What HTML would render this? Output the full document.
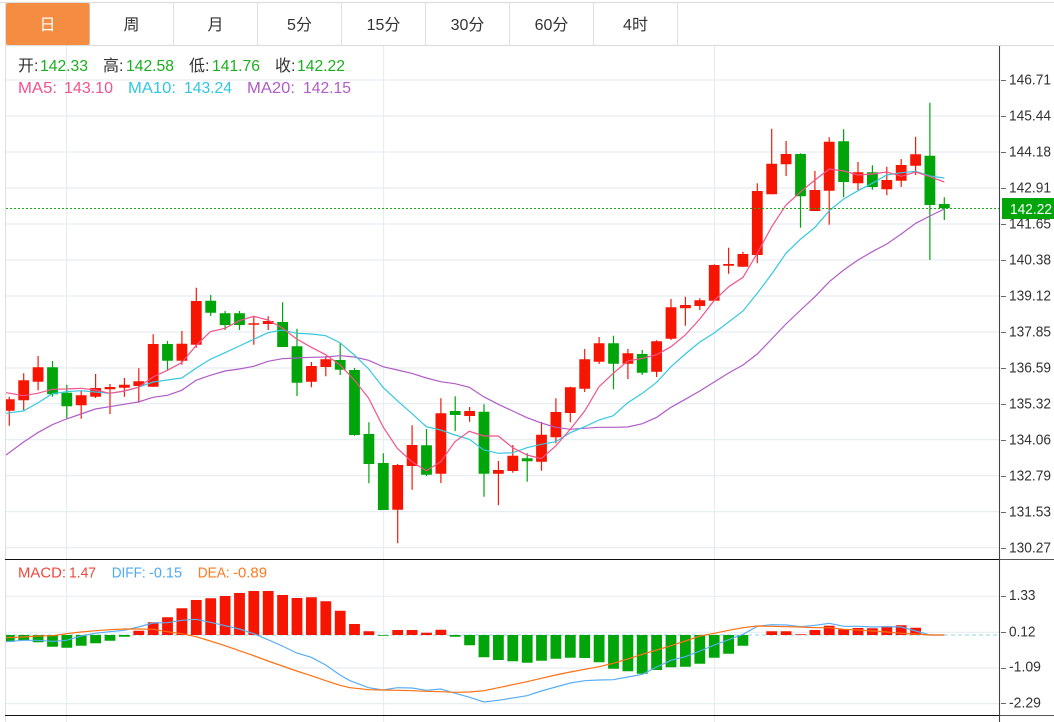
<!DOCTYPE html>
<html lang="zh"><head><meta charset="utf-8"><title>K线图</title>
<style>
html,body{margin:0;padding:0;background:#fff;width:1054px;height:722px;overflow:hidden}
svg{display:block}
text{font-family:"Liberation Sans","Noto Sans CJK SC",sans-serif}
</style></head><body>
<svg width="1054" height="722" viewBox="0 0 1054 722" xmlns="http://www.w3.org/2000/svg">
<defs><clipPath id="c"><rect x="6" y="46" width="993" height="676"/></clipPath></defs>
<!-- grid -->
<path d="M6 80H999M6 116H999M6 152H999M6 188H999M6 224H999M6 260H999M6 296H999M6 332H999M6 368H999M6 403.6H999M6 439.6H999M6 475.6H999M6 511.6H999M6 547.6H999M6 596.3H999M6 632.3H999M6 668H999M6 703.6H999M66.5 46V722M383.5 46V722M714.5 46V722" stroke="#e6eef4" stroke-width="1.2" fill="none"/>
<!-- frame -->
<path d="M0 2.5H1054M5 45.5H1054" stroke="#dedede" stroke-width="1.2" fill="none"/>
<path d="M5.5 2V722M173.5 3V45M257.5 3V45M341.5 3V45M425.5 3V45M509.5 3V45M593.5 3V45M677.5 3V45M89.5 3V45" stroke="#dedede" stroke-width="1" fill="none"/>
<rect x="6" y="3" width="83.5" height="42" rx="2" fill="#f48c42"/>
<g font-size="16" fill="#333" text-anchor="middle">
<text x="47.5" y="30" fill="#fff">日</text><text x="131.5" y="30">周</text><text x="215.5" y="30">月</text><text x="299.5" y="30">5分</text><text x="383.5" y="30">15分</text><text x="467.5" y="30">30分</text><text x="551.5" y="30">60分</text><text x="635.5" y="30">4时</text>
</g>
<g clip-path="url(#c)" fill="none">
<!-- zero line -->
<path d="M6 635H999" stroke="#a9dcee" stroke-width="1.3" stroke-dasharray="4 3"/>
<!-- candle wicks -->
<path stroke="#f61a06" stroke-width="1.2" d="M9.3 396.7V425.7M23.7 373.3V410M38.1 356V390.3M81.2 391V418.7M95.6 374V398M110 384V414M124.4 378V396.7M138.8 368.3V402.7M153.2 334.3V386.7M181.9 331V364.7M196.3 287.7V347.7M253.8 316.7V344.7M268.2 316.3V330M311.4 362V387.3M325.8 356V376.3M397.7 464V543.3M412.1 425.3V489.7M440.9 398.3V483M469.6 407V421.7M498.4 461V505.3M512.8 445V472.7M541.5 422V470.7M555.9 398.3V443.3M570.3 386.7V422.3M584.7 349V392M599.1 337V364M627.9 349V379M656.6 340.3V377M671 299V340M685.4 296.7V325.7M699.8 298.3V310M714.2 264.3V300.7M728.6 247.7V273.7M742.9 251.7V266.7M757.3 183.3V263.3M771.7 128.7V194.3M786.1 141V176M814.9 171V211M829.2 137.3V224.7M858 162V190M886.8 166.7V195.3M901.2 159V187M915.6 136.7V175"/>
<path stroke="#00a50a" stroke-width="1.2" d="M52.5 361V396.7M66.8 384.7V418.3M167.5 341V370.7M210.7 295V316M225.1 311V330M239.5 311V330M282.6 302.3V347M297 328.7V396M340.2 343.3V375M354.5 368V435.7M368.9 422.3V483.3M383.3 453.3V510M426.5 429V476M455.2 396.3V431M484 404.3V496.7M527.2 453.3V481.7M613.5 335.7V389.3M642.2 350V375M800.5 153.3V227.7M843.6 129.3V197.3M872.4 165.3V189.7M929.9 102.7V260M944.3 197.3V220"/>
<!-- candle bodies -->
<path stroke="#f61500" stroke-width="10.8" d="M9.3 399.3V410.7M23.7 380.3V400.3M38.1 367.3V381.7M81.2 395.3V405.3M95.6 388V396.7M110 387V389.3M124.4 384.7V387.7M138.8 381.3V386M153.2 344V386.7M181.9 343.7V360.7M196.3 301V344.7M253.8 323.3V324.7M268.2 321V324M311.4 366V381.7M325.8 359.3V367M397.7 465V509.7M412.1 445V466M440.9 413.3V473.7M469.6 411V416M498.4 470V473.7M512.8 455.7V471M541.5 434.7V461.7M555.9 412V437.3M570.3 387.3V413M584.7 359.3V388.7M599.1 343.3V361.7M627.9 353.3V363.7M656.6 341.3V371.7M671 307.3V338.7M685.4 305V308.3M699.8 300.3V306M714.2 265V300.7M728.6 264V265.7M742.9 254V266.7M757.3 191V255M771.7 163.7V194.3M786.1 154V164.3M814.9 190V211M829.2 141.7V190.7M858 172.3V183.3M886.8 180V189.3M901.2 165V180.7M915.6 154.3V165.7"/>
<path stroke="#00a50a" stroke-width="10.8" d="M52.5 367.3V394.3M66.8 392.7V406.3M167.5 344V360.7M210.7 300.7V312.7M225.1 313.3V325M239.5 313.3V325M282.6 322V347M297 346.3V382.7M340.2 360V369.7M354.5 370V435M368.9 434V464M383.3 463V510M426.5 445.3V474.7M455.2 411V415M484 411.7V473.7M527.2 458.3V461.3M613.5 343.3V363.7M642.2 354V372.7M800.5 154V196.3M843.6 141.3V182M872.4 172.3V187M929.9 155.7V205M944.3 204V208.3"/>
<!-- MACD bars -->
<path stroke="#00a50a" stroke-width="10.8" d="M9.3 635V641.7M23.7 635V640M38.1 635V642.3M52.5 635V646.7M66.8 635V647.7M81.2 635V645.7M95.6 635V643.3M110 635V640.7M124.4 635V636.7M383.3 635V635.7M455.2 635V636.7M469.6 635V645.3M484 635V657.3M498.4 635V660M512.8 635V661.3M527.2 635V662.7M541.5 635V660.7M555.9 635V658.7M570.3 635V657.7M584.7 635V658M599.1 635V662.3M613.5 635V668.7M627.9 635V671.3M642.2 635V673.7M656.6 635V670M671 635V667.3M685.4 635V666.7M699.8 635V663.7M714.2 635V657.7M728.6 635V653.7M742.9 635V645.7"/>
<path stroke="#f61500" stroke-width="10.8" d="M138.8 635V630.7M153.2 635V622.3M167.5 635V617.3M181.9 635V608.3M196.3 635V600M210.7 635V598.3M225.1 635V596M239.5 635V593M253.8 635V591M268.2 635V591M282.6 635V595M297 635V598M311.4 635V597.3M325.8 635V601.3M340.2 635V610.7M354.5 635V624M368.9 635V631.3M397.7 635V630M412.1 635V630M426.5 635V632.7M440.9 635V629.7M771.7 635V631.3M786.1 635V631.3M800.5 635V634.3M814.9 635V630M829.2 635V625.7M843.6 635V629.3M858 635V628M872.4 635V628.3M886.8 635V626.3M901.2 635V625.3M915.6 635V627.7"/>
<!-- MA lines -->
<polyline stroke="#b25cc8" stroke-width="1.2" points="6,455 23.3,442.3 37.7,432.7 52.3,424.7 66.3,419 81,414 95.3,409 109.7,406.7 124,404.3 138.3,402 153,397.3 167.3,395.3 181.7,390.3 196,380.3 210.3,375.3 225,371 239.3,369 253.7,366.3 268,361.3 282.3,358.7 296.7,358 311.3,357.3 325.7,357 340,355.7 354.3,357 368.7,360.3 383,366.7 397.3,370 411.7,373.3 426.3,378 440.7,381.7 455,383.7 469.3,387.3 483.7,396.7 498.3,404.3 512.7,411 527,417.7 541.3,423 555.7,427.3 570.3,429.3 584.7,428.3 599,427.3 613.3,427.3 627.7,427 642.3,423.7 656.7,417.3 671,407.3 685.3,399.3 699.8,391 714.2,382 728.6,373 743,365 757.3,354 771.7,339 786,324 800.7,310 815,296.7 829.3,281.7 843.7,270 858,260 872.3,251.7 886.7,244 901.3,234 915.7,223.3 930,216 944.3,209"/>
<polyline stroke="#35c8e0" stroke-width="1.2" points="6,413.3 10,412.7 23.3,411 37.7,403 52.3,393.7 66.3,391.7 81,390.7 95.3,392 109.7,393.3 124,391.3 138.3,387.3 153,382 167.3,380 181.7,378 196,368.3 210.3,359.3 225,352.7 239.3,346 253.7,339.3 268,332.7 282.3,330 296.7,333.3 311.3,334 325.7,335.7 340,342.7 354.3,355 368.7,369 383,387.3 397.3,400.7 411.7,413.3 426.3,426.7 440.7,430 455,435 469.3,439.3 483.7,450 498.3,453.3 512.7,452.7 527,447.7 541.3,444.3 555.7,441.7 570.3,432.7 584.7,426.7 599,420 613.3,415.7 627.7,402.7 642.3,393.3 656.7,382.3 671,366.7 685.3,354 699.8,342 714.2,333 728.6,322 743,311 757.3,293.3 771.7,274 786,253.3 800.7,239 815,227.3 829.3,210.7 843.7,199 858,190.7 872.3,183.3 886.7,175 901.3,172.7 915.7,171.3 930,176 944.3,178"/>
<polyline stroke="#f2528c" stroke-width="1.2" points="6,392.7 10,393.3 23.3,395.7 37.7,393.3 52.3,389.3 66.3,389 81,388.3 95.3,390 109.7,393.3 124,391 138.3,387.3 153,377 167.3,370.3 181.7,362.7 196,345.7 210.3,331.7 225,328.3 239.3,320.7 253.7,316.3 268,320 282.3,328 296.7,339 311.3,347.3 325.7,354.7 340,365 354.3,380 368.7,398.3 383,426.7 397.3,448.3 411.7,461.7 426.3,470.7 440.7,461.7 455,441.7 469.3,431.3 483.7,436 498.3,436 512.7,447.7 527,455 541.3,458.7 555.7,446 570.3,429.3 584.7,411 599,386.7 613.3,373.3 627.7,361 642.3,358.3 656.7,354.7 671,346.7 685.3,335 699.8,319 714,300.7 728.7,286.7 743,277.3 757.3,253.3 771.7,226.7 786,205 800.7,191.7 815,180 829.3,169 843.7,171 858,175 872.3,174 886.7,172 901.3,176.3 915.7,172 930,176.7 944.3,182"/>
<!-- MACD lines -->
<polyline stroke="#5aaef5" stroke-width="1.2" points="6,641.7 23.3,640.3 37.7,640.3 52.3,641.3 66.3,640.3 81,636 95.3,633.3 109.7,631.7 124,630.3 138.3,627 153,623 167.3,622.7 181.7,620.3 196,619.3 210.3,622.3 225,625.7 239.3,629 253.7,633.7 268,639.7 282.3,646 296.7,653 311.3,657.3 325.7,665 340,675 350,680.7 368.7,687.7 383,690 397.3,687.7 412,688 426.3,690.3 440.7,689 455.3,693.3 469.7,697.3 484,702 498.3,700.3 527,695.7 541.3,691 555.7,687 570.3,683 584.7,680.7 599,680 613.3,679.7 627.7,677 642.3,674.3 656.7,667 671,660.3 685.3,656.7 700,651 714.3,645 728.7,639.7 743,634.3 757.3,626.3 771.7,624.7 786.3,625 800.7,626.7 815,625.3 829.3,623.3 843.7,626.3 858.3,626.3 872.7,627 887,626.7 901.3,627 915.7,631 930,635 944.3,635"/>
<polyline stroke="#ff7014" stroke-width="1.2" points="6,637.7 23.3,637 37.7,636 52.3,635.7 66.3,633.7 81,632 95.3,630.7 109.7,629.7 124,629 138.3,629 153,629.3 167.3,631.7 181.7,633.7 196,636.7 210.3,641 225,645.7 239.3,650.7 253.7,655.7 268,661 282.3,666 296.7,671 311.3,675.7 325.7,680.7 340,685.3 350,687.7 368.7,689.7 383,690 397.3,690.3 412,690.7 426.3,691.3 440.7,691.7 455.3,692.3 469.7,692 484,690.7 498.3,687.7 527,681.7 541.3,678.3 555.7,675 570.3,672 584.7,669.3 599,666.7 613.3,663.3 627.7,659 642.3,654.3 656.7,650 671,645.7 685.3,641 700,636 714.3,633.3 728.7,630.3 743,627.7 757.3,626 771.7,626.3 786.3,626.7 800.7,627 815,627.7 829.3,627.7 843.7,629.3 858.3,630 872.7,631 887,632 901.3,633.3 915.7,634 930,635 944.3,635"/>
<!-- price line -->
<path d="M6 208.5H999" stroke="#12b012" stroke-width="1" stroke-dasharray="2 2"/>
</g>
<!-- separators and axis -->
<path d="M5 559.5H999M5 715.5H999" stroke="#111" stroke-width="1.1" fill="none"/>
<path d="M999 559.5H1054M999 715.5H1054" stroke="#555" stroke-width="1" fill="none"/>
<path d="M999.5 46V722" stroke="#444" stroke-width="1.1" fill="none"/>
<path d="M1001 80.5H1006M1001 116.5H1006M1001 152.5H1006M1001 188.5H1006M1001 224.5H1006M1001 260.5H1006M1001 296.5H1006M1001 332.5H1006M1001 368.5H1006M1001 404.5H1006M1001 440.5H1006M1001 476.5H1006M1001 512.5H1006M1001 548.5H1006M1001 596.5H1006M1001 632.5H1006M1001 668.5H1006M1001 703.5H1006" stroke="#666" stroke-width="1" fill="none"/>
<!-- axis labels -->
<g font-size="15" fill="#333" lengthAdjust="spacingAndGlyphs">
<text x="1009" y="84.7" textLength="42" lengthAdjust="spacingAndGlyphs">146.71</text>
<text x="1009" y="120.7" textLength="42" lengthAdjust="spacingAndGlyphs">145.44</text>
<text x="1009" y="156.7" textLength="42" lengthAdjust="spacingAndGlyphs">144.18</text>
<text x="1009" y="192.7" textLength="42" lengthAdjust="spacingAndGlyphs">142.91</text>
<text x="1009" y="228.7" textLength="42" lengthAdjust="spacingAndGlyphs">141.65</text>
<text x="1009" y="264.7" textLength="42" lengthAdjust="spacingAndGlyphs">140.38</text>
<text x="1009" y="300.7" textLength="42" lengthAdjust="spacingAndGlyphs">139.12</text>
<text x="1009" y="336.7" textLength="42" lengthAdjust="spacingAndGlyphs">137.85</text>
<text x="1009" y="372.7" textLength="42" lengthAdjust="spacingAndGlyphs">136.59</text>
<text x="1009" y="408.4" textLength="42" lengthAdjust="spacingAndGlyphs">135.32</text>
<text x="1009" y="444.4" textLength="42" lengthAdjust="spacingAndGlyphs">134.06</text>
<text x="1009" y="480.4" textLength="42" lengthAdjust="spacingAndGlyphs">132.79</text>
<text x="1009" y="516.4" textLength="42" lengthAdjust="spacingAndGlyphs">131.53</text>
<text x="1009" y="552.4" textLength="42" lengthAdjust="spacingAndGlyphs">130.27</text>
<text x="1009" y="600" textLength="26.5" lengthAdjust="spacingAndGlyphs">1.33</text>
<text x="1009" y="636.5" textLength="26.5" lengthAdjust="spacingAndGlyphs">0.12</text>
<text x="1009" y="671.7" textLength="32" lengthAdjust="spacingAndGlyphs">-1.09</text>
<text x="1009" y="707.7" textLength="32" lengthAdjust="spacingAndGlyphs">-2.29</text>
</g>
<rect x="1002" y="198" width="52" height="21" fill="#00a50a"/>
<text x="1010" y="214" font-size="15" fill="#fff" textLength="42" lengthAdjust="spacingAndGlyphs">142.22</text>
<!-- OHLC -->
<g font-size="16" fill="#333">
<text x="18" y="71">开:</text><text x="103" y="71">高:</text><text x="189" y="71">低:</text><text x="275" y="71">收:</text>
</g>
<g font-size="16" fill="#19b01e">
<text x="40" y="71" textLength="48" lengthAdjust="spacingAndGlyphs">142.33</text>
<text x="126" y="71" textLength="48" lengthAdjust="spacingAndGlyphs">142.58</text>
<text x="212" y="71" textLength="48" lengthAdjust="spacingAndGlyphs">141.76</text>
<text x="297" y="71" textLength="48" lengthAdjust="spacingAndGlyphs">142.22</text>
</g>
<g font-size="16">
<text x="18" y="93" fill="#f2528c" textLength="39" lengthAdjust="spacingAndGlyphs">MA5:</text>
<text x="64" y="93" fill="#f2528c" textLength="49" lengthAdjust="spacingAndGlyphs">143.10</text>
<text x="128" y="93" fill="#2fc6e2" textLength="48" lengthAdjust="spacingAndGlyphs">MA10:</text>
<text x="184" y="93" fill="#2fc6e2" textLength="48" lengthAdjust="spacingAndGlyphs">143.24</text>
<text x="247" y="93" fill="#b25cc8" textLength="48" lengthAdjust="spacingAndGlyphs">MA20:</text>
<text x="303" y="93" fill="#b25cc8" textLength="48" lengthAdjust="spacingAndGlyphs">142.15</text>
</g>
<!-- MACD legend -->
<g font-size="15">
<text x="18" y="577.7" fill="#f0483c" textLength="48" lengthAdjust="spacingAndGlyphs">MACD:</text>
<text x="69" y="577.7" fill="#f0483c" textLength="27" lengthAdjust="spacingAndGlyphs">1.47</text>
<text x="111.7" y="577.7" fill="#4fa9f5" textLength="34" lengthAdjust="spacingAndGlyphs">DIFF:</text>
<text x="149" y="577.7" fill="#4fa9f5" textLength="33" lengthAdjust="spacingAndGlyphs">-0.15</text>
<text x="197.7" y="577.7" fill="#ff7a20" textLength="32" lengthAdjust="spacingAndGlyphs">DEA:</text>
<text x="233" y="577.7" fill="#ff7a20" textLength="34" lengthAdjust="spacingAndGlyphs">-0.89</text>
</g>
</svg>
</body></html>
